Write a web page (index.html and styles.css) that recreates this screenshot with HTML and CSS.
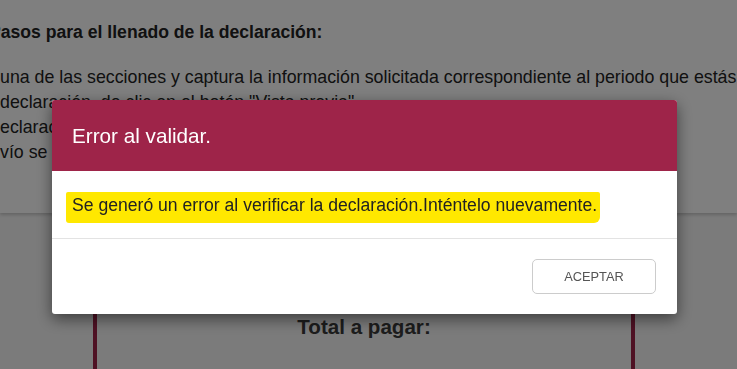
FILE: index.html
```html
<!DOCTYPE html>
<html lang="es">
<head>
    <meta charset="UTF-8">
    <meta name="viewport" content="width=device-width, initial-scale=1.0">
    <title>Declaración</title>
    <link rel="stylesheet" href="styles.css">
</head>
<body>
    <div class="page">
        <section class="steps">
            <h3 class="steps-title">Pasos para el llenado de la declaración:</h3>
            <ul class="steps-list">
                <li>una de las secciones y captura la información solicitada correspondiente al periodo que estás declarando.</li>
                <li>declaración, de clic en el botón "Vista previa".</li>
                <li>eclaración</li>
                <li>vío se genera</li>
            </ul>
        </section>

        <div class="total-card">
            <h2>Total a pagar:</h2>
        </div>
    </div>

    <!-- modal de error -->
    <div class="overlay">
        <div class="modal">
            <div class="modal-header">
                <h4>Error al validar.</h4>
            </div>
            <div class="modal-body">
                <span class="marker">Se generó un error al verificar la declaración.Inténtelo nuevamente.</span>
            </div>
            <div class="modal-footer">
                <button class="btn-accept">ACEPTAR</button>
            </div>
        </div>
    </div>
</body>
</html>
```

FILE: styles.css
```css
* {
    margin: 0;
    padding: 0;
    box-sizing: border-box;
}

html,
body {
    height: 100%;
}

body {
    font-family: 'Liberation Sans', Arial, sans-serif;
    color: #222;
    background-color: #f6f6f6;
    overflow: hidden;
}

.steps {
    background-color: #fff;
    height: 213px;
    padding-top: 21px;
    box-shadow: 0 2px 3px rgba(0, 0, 0, 0.18);
    overflow: hidden;
}

.steps-title {
    font-size: 17.6px;
    font-weight: bold;
    margin-left: -11px;
    line-height: 22px;
    white-space: nowrap;
}

.steps-list {
    list-style: none;
    margin-top: 22px;
    font-size: 17.8px;
    line-height: 25px;
    white-space: nowrap;
}

.total-card {
    width: 542px;
    height: 116px;
    margin: 40px 0 0 93px;
    border-left: 4px solid #9e2449;
    border-right: 4px solid #9e2449;
    padding-top: 62px;
    text-align: center;
}

.total-card h2 {
    font-size: 20.6px;
    font-weight: bold;
    color: #3a3a3a;
}

.overlay {
    position: fixed;
    top: 0;
    left: 0;
    right: 0;
    bottom: 0;
    background-color: rgba(0, 0, 0, 0.5);
    padding: 100px 0 0 52px;
}

.modal {
    width: 625px;
    background-color: #fff;
    border-radius: 3px;
    box-shadow: 0 5px 15px rgba(0, 0, 0, 0.5);
    overflow: hidden;
}

.modal-header {
    height: 71px;
    background-color: #9e2449;
    color: #fff;
    display: flex;
    align-items: center;
    padding: 0 20px;
}

.modal-header h4 {
    font-size: 20.7px;
    font-weight: normal;
}

.modal-body {
    height: 68px;
    padding: 6px 14px 0;
    display: flex;
    align-items: center;
    border-bottom: 1px solid #e3e3e3;
    font-size: 17.6px;
    color: #222;
}

.marker {
    background-color: #ffe800;
    padding: 3px 3px 7px 6px;
    border-radius: 2px 2px 6px 3px;
}

.modal-footer {
    display: flex;
    justify-content: flex-end;
    padding: 20px 21px 20px;
}

.btn-accept {
    width: 124px;
    height: 35px;
    background-color: #fff;
    border: 1px solid #ccc;
    border-radius: 5px;
    font-family: 'Liberation Sans', Arial, sans-serif;
    font-size: 12.8px;
    color: #555;
}
```
